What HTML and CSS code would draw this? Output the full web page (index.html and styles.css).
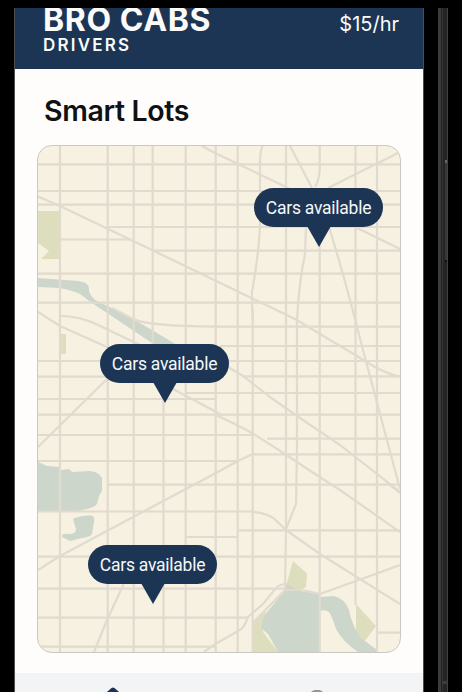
FILE: index.html
```
<!DOCTYPE html>
<html lang="en">
<head>
<meta charset="utf-8">
<title>Bro Cabs Drivers</title>
<link rel="stylesheet" href="styles.css">
</head>
<body>
<div class="device">
  <main class="screen">
    <header class="header">
      <div class="brand">
        <div class="brand-name">BRO CABS</div>
        <div class="brand-sub">DRIVERS</div>
      </div>
      <div class="rate">$15/hr</div>
    </header>
    <section class="content">
      <h1 class="title">Smart Lots</h1>
      <div class="map">
        <svg class="map-art" viewBox="38 146 362 506" aria-hidden="true">
          <g class="park">
            <path d="M38 211H60V259H41L49 251L38 243Z"/>
            <path d="M61 334H66V354H61Z"/>
            <path d="M293 561L307 573.500L306 587Q302 592 286 586Z"/>
            <path d="M356 604L376 626L364 642L356 632Z"/>
            <path d="M253 623L266 611L263 632L278 652H253Z"/>
          </g>
          <g class="water">
            <path d="M38 278L78 281Q89 282 89 289Q88 293 95 300Q125 314 152 330L177 345H155L128 327L92 303L80 294Q74 291 60 288L38 287Z"/>
            <path d="M38 462L47 466L60 467L61 470L69 469L72 472L90 471Q99 472 102 478V491L99 496L97 504Q94 508 78 511H38Z"/>
            <path d="M73 519Q80 515 92 515.500Q95 517 94 522L92 534Q90 537 82 538L70 541L62 537Q61 533 69 534Q76 534 76 529Z"/>
            <path d="M286 584L300 591L320 594V652H278L268 634L261 628L264 616L285 590Z"/>
            <path d="M320 597L334 596Q344 598 349 610Q352 626 361 638L377 650V652H358Q343 642 336 629Q332 616 329 612Q325 609 320 611Z"/>
          </g>
          <g class="roads">
            <path d="M60 146V652M107.700 146V652M133.700 146V652M152.700 146V345M163.500 400V652M185.700 146V652M215.700 146V652M237.700 146V652M252.700 310V652M286 146V530L285 588M319.700 240V652M355.500 146V605M377 146V652"/>
            <path d="M38 164.300H400M38 191H400M38 204.700H400M107 227H400M60 239.500H131M153 250.700H400M38 273.700H400M38 302.700H400M216 326.700H400M220 346H400M38 361H400M38 376.700H110M242 376.300H400M186 393H400M38 399H216M38 414.700H400M38 435H253M267 438.700H400M252 454.300H400M38 461H238M107 484.700H400"/>
            <path d="M38 511.500H250Q266 513 274 518.500L286 530L320 554L400 604M238 530.300H400M186 537H238M38 556.700H400M38 588.700H285M38 617.700H248M38 646.700H216M377 632.700H400"/>
            <path d="M38 196.500L60 206L152 250L295 319L320 334L357 356Q384 374 400 376.500"/>
            <path d="M202 146L215 153L286 187L355 227L400 249M290 146L312 188M400 152L328 188M319.700 146V170Q319 181 315 187M262.500 146Q260 152 260 162V227Q258 260 252 292Q252 306 252.700 320"/>
            <path d="M306 227L305 254Q299 282 297 320V450L296 504L286 529M329 227Q342 269 354 315L363 350L380 414L400 489"/>
            <path d="M38 312L60 326L107 347M60 316Q79 316 96 324L140 345M112 308L133 319Q147 326 216 326.700M38 447L107 379L125 361M160 382L220 414M228 367L243 376L270 397L297 416L340 445L400 492M216 415L235 424L252 433L285 454L315 474L340 490L400 532"/>
            <path d="M252 454.300L238 461L203 480L150 508L60 556L38 570M123.700 584L107 620L94 652M204 652L217 643L240 630Q244 628 248 617L263 604L276 588Q280 584 287 584M252.700 623L285 590M286 590H300Q309 591 320 594L400 565M386 482L400 493"/>
          </g>
        </svg>
        <div class="pin pin-north">Cars available<svg class="tip" viewBox="0 0 24 21"><path d="M0 0H24L12 21Z"/></svg></div>
        <div class="pin pin-center">Cars available<svg class="tip" viewBox="0 0 24 21"><path d="M0 0H24L12 21Z"/></svg></div>
        <div class="pin pin-south">Cars available<svg class="tip" viewBox="0 0 24 21"><path d="M0 0H24L12 21Z"/></svg></div>
      </div>
    </section>
    <nav class="tabs">
      <svg class="tab-icon" viewBox="0 0 28 28"><path fill="#1d3554" d="M12.500 1Q14 0 15.500 1L27 11V27H1V11Z"/></svg>
      <svg class="tab-icon tab-profile" viewBox="0 0 28 28"><circle cx="14" cy="9" r="8" fill="none" stroke="#929496" stroke-width="2.500"/></svg>
    </nav>
  </main>
  <div class="rail"><span class="side-button"></span><span class="seam"></span></div>
</div>
</body>
</html>
```

FILE: styles.css
```
* { box-sizing: border-box; }
body {
  margin: 0;
  background: #000;
  font-family: Inter, "Liberation Sans", sans-serif;
}
.device {
  display: flex;
  height: 692px;
  padding: 8px 0 0 14px;
  overflow: hidden;
}
.screen {
  display: flex;
  flex-direction: column;
  width: 410px;
  border: solid #4c4e50;
  border-width: 0 1px;
  background: #fefdfc;
}
.header {
  display: flex;
  justify-content: space-between;
  height: 61px;
  padding: 0 24px 0 28px;
  overflow: hidden;
  background: #1d3554;
  color: #fbfbfa;
}
.brand { margin-top: -6px; }
.brand-name {
  font-size: 32px;
  font-weight: 700;
  line-height: 35px;
  letter-spacing: 0.6px;
  white-space: nowrap;
}
.brand-sub {
  margin-top: -1px;
  font-size: 17px;
  font-weight: 600;
  line-height: 18px;
  letter-spacing: 2.200px;
}
.rate {
  margin-top: 4px;
  font-size: 20px;
  line-height: 25px;
}
.content {
  height: 603.500px;
  padding: 24px 22px 0;
}
.title {
  margin: 0 0 16px;
  padding-left: 7px;
  font-size: 28.500px;
  font-weight: 600;
  line-height: 36px;
  letter-spacing: -0.350px;
  color: #101112;
}
.map {
  position: relative;
  width: 364px;
  height: 508px;
  overflow: hidden;
  border: 1px solid #c9c9c1;
  border-radius: 15px;
  background: #f7f1e1;
}
.map-art { display: block; width: 362px; height: 506px; }
.park { fill: #dddebd; }
.water { fill: #cdd6cb; }
.roads { fill: none; stroke: #e1dace; stroke-width: 2.200; stroke-linejoin: round; }
.pin {
  position: absolute;
  width: 129px;
  height: 39px;
  border-radius: 20px;
  background: #1d3554;
  color: #f6f7f8;
  font-family: Roboto, sans-serif;
  font-size: 17.500px;
  line-height: 40px;
  letter-spacing: -0.250px;
  text-align: center;
  white-space: nowrap;
}
.tip {
  position: absolute;
  top: 38px;
  left: 53px;
  width: 24px;
  height: 21px;
  fill: #1d3554;
}
.pin-north { left: 216px; top: 42px; }
.pin-center { left: 62px; top: 198px; }
.pin-south { left: 50px; top: 399px; }
.tabs {
  display: flex;
  justify-content: space-around;
  flex: 1;
  padding-top: 14px;
  overflow: hidden;
  background: #f2f4f6;
}
.tab-icon { flex: none; width: 28px; height: 28px; margin-right: 8px; }
.tab-profile { margin-top: 3px; }
.rail {
  display: flex;
  flex-direction: column;
  width: 10px;
  margin-left: 14px;
  background: linear-gradient(90deg, #3b3b3b 0 3px, #202020 3px 4px, #343434 4px 5px, #242424 5px 9px, #414141 9px);
}
.side-button {
  width: 2px;
  height: 102px;
  margin: 152px 0 0 7px;
  border-top: 3px solid #666;
  border-bottom: 2px solid #111;
  background: #373737;
}
.seam { height: 3px; margin: 419px 0 0 4px; background: #3c3c3c; }
```
